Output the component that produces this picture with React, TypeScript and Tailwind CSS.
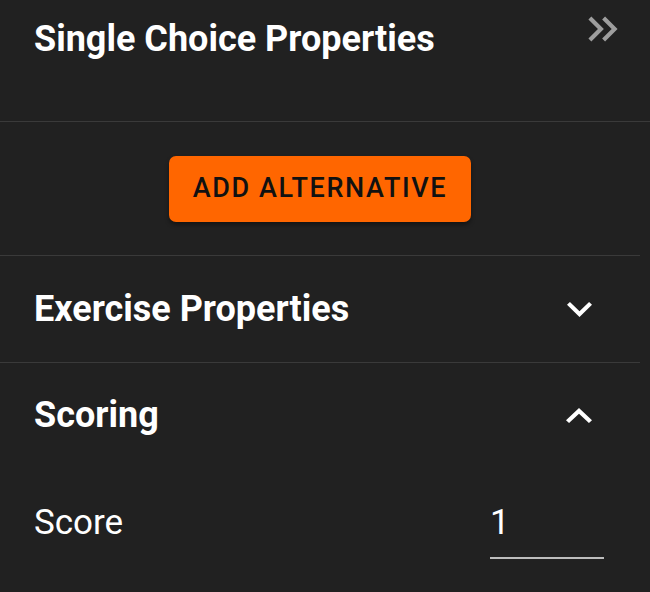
import React from "react";

function DoubleChevron() {
  return (
    <svg width="50" height="50" viewBox="0 0 24 24" className="mt-[4px] mr-[22px] shrink-0" fill="#9e9e9e">
      <path d="M6.41 6 5 7.41 9.58 12 5 16.59 6.41 18l6-6z" />
      <path d="M13 6l-1.41 1.41L16.17 12l-4.58 4.59L13 18l6-6z" />
    </svg>
  );
}

function ChevronDown() {
  return (
    <svg width="25" height="15" viewBox="6 8.59 12 7.41" fill="#ffffff" preserveAspectRatio="none">
      <path d="M16.59 8.59 12 13.17 7.41 8.59 6 10l6 6 6-6z" />
    </svg>
  );
}

function ChevronUp() {
  return (
    <svg width="26" height="15" viewBox="6 8 12 7.41" fill="#ffffff" preserveAspectRatio="none">
      <path d="m12 8-6 6 1.41 1.41L12 10.83l4.59 4.58L18 14z" />
    </svg>
  );
}

export default function App() {
  return (
    <div
      className="w-[650px] h-[592px] bg-[#212121] text-white overflow-hidden"
      style={{ fontFamily: "Roboto, 'Noto Sans', sans-serif" }}
    >
      <div className="h-[122px] border-b border-[#3a3a3a] flex justify-between items-start pl-[34px]">
        <h1 className="text-[36px] leading-[42px] font-bold mt-[18px]">
          Single Choice Properties
        </h1>
        <DoubleChevron />
      </div>
      <div className="w-[640px]">
        <div className="h-[134px] border-b border-[#3a3a3a] flex items-center justify-center">
          <button className="h-[66px] w-[302px] rounded-[7px] bg-[#ff6600] text-[#111] text-[27px] font-medium tracking-[0.06em] uppercase shadow-[0_3px_4px_rgba(0,0,0,0.4)] flex items-center justify-center">
            Add Alternative
          </button>
        </div>
        <div className="h-[107px] border-b border-[#3a3a3a] flex items-center justify-between pl-[34px] pr-[48px]">
          <span className="text-[36px] font-bold leading-[42px]">Exercise Properties</span>
          <ChevronDown />
        </div>
        <div className="h-[104px] flex items-center justify-between pl-[34px] pr-[48px]">
          <span className="text-[36px] font-bold leading-[42px]">Scoring</span>
          <ChevronUp />
        </div>
        <div className="flex items-start justify-between pl-[34px] pr-[36px]">
          <span className="text-[35px] leading-[42px] mt-[35px]">Score</span>
          <div className="w-[114px] border-b-2 border-[#bdbdbd] h-[92px] flex items-start">
            <span className="text-[35px] leading-[42px] mt-[35px]">1</span>
          </div>
        </div>
      </div>
    </div>
  );
}
